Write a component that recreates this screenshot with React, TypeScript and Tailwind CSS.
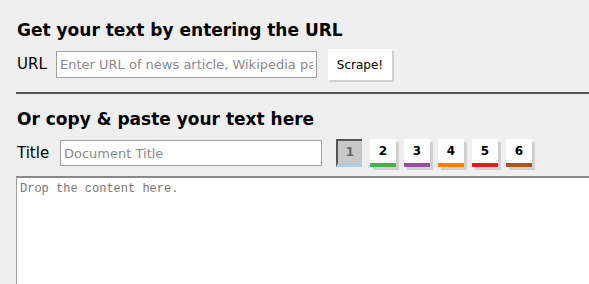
const tabs = [
  { n: '1', bar: 'border-b-[#b3cde3]' },
  { n: '2', bar: 'border-b-[#4daf4a]' },
  { n: '3', bar: 'border-b-[#984ea3]' },
  { n: '4', bar: 'border-b-[#ff7f00]' },
  { n: '5', bar: 'border-b-[#e41a1c]' },
  { n: '6', bar: 'border-b-[#a65628]' },
]

const App = () => {
  const active = '1'

  return (
    <div className="h-[284px] overflow-hidden bg-[#efefef] pl-4 font-['DejaVu_Sans',sans-serif] text-black">
      <h2 className="pt-[19px] pl-px text-[17px] leading-[22px] font-bold">
        Get your text by entering the URL
      </h2>
      <div className="mt-[8px] flex items-center">
        <label className="w-[40px] pl-px text-[15px]">URL</label>
        <input
          type="text"
          placeholder="Enter URL of news article, Wikipedia page"
          className="h-[27px] w-[261px] border border-[#a0a0a0] bg-white px-[3px] text-[13px] outline-none placeholder:text-[#8a8a8a]"
        />
        <button className="ml-[11px] h-[31px] w-[64px] bg-white text-[12px] shadow-[2px_2px_0_#cfcfcf]">
          Scrape!
        </button>
      </div>
      <hr className="mt-[12px] border-t-2 border-[#555]" />
      <h2 className="pt-[14px] pl-px text-[17px] leading-[22px] font-bold">
        Or copy &amp; paste your text here
      </h2>
      <div className="mt-[9px] flex items-center">
        <label className="w-[44px] pl-px text-[15px]">Title</label>
        <input
          type="text"
          placeholder="Document Title"
          className="h-[26px] w-[262px] border border-[#a0a0a0] bg-white px-[3px] text-[13px] outline-none placeholder:text-[#8a8a8a]"
        />
        <div className="ml-[14px] flex gap-[8px]">
          {tabs.map((t) =>
            t.n === active ? (
              <button
                key={t.n}
                className={`h-[28px] w-[26px] border-t-2 border-l-2 border-b-4 border-t-[#555] border-l-[#555] bg-[#c8c8c8] text-[12px] font-bold text-[#666] ${t.bar}`}
              >
                {t.n}
              </button>
            ) : (
              <button
                key={t.n}
                className={`h-[28px] w-[26px] border-b-4 bg-white text-[12px] font-bold shadow-[3px_3px_0_#d0d0d0] ${t.bar}`}
              >
                {t.n}
              </button>
            )
          )}
        </div>
      </div>
      <textarea
        placeholder="Drop the content here."
        className="mt-[9px] block h-[140px] w-[600px] resize-none border border-[#a0a0a0] border-t-2 border-t-[#888] bg-white px-[3px] pt-[2px] font-['Liberation_Mono',monospace] text-[12px] outline-none placeholder:text-[#777]"
      />
    </div>
  )
}

export default App
